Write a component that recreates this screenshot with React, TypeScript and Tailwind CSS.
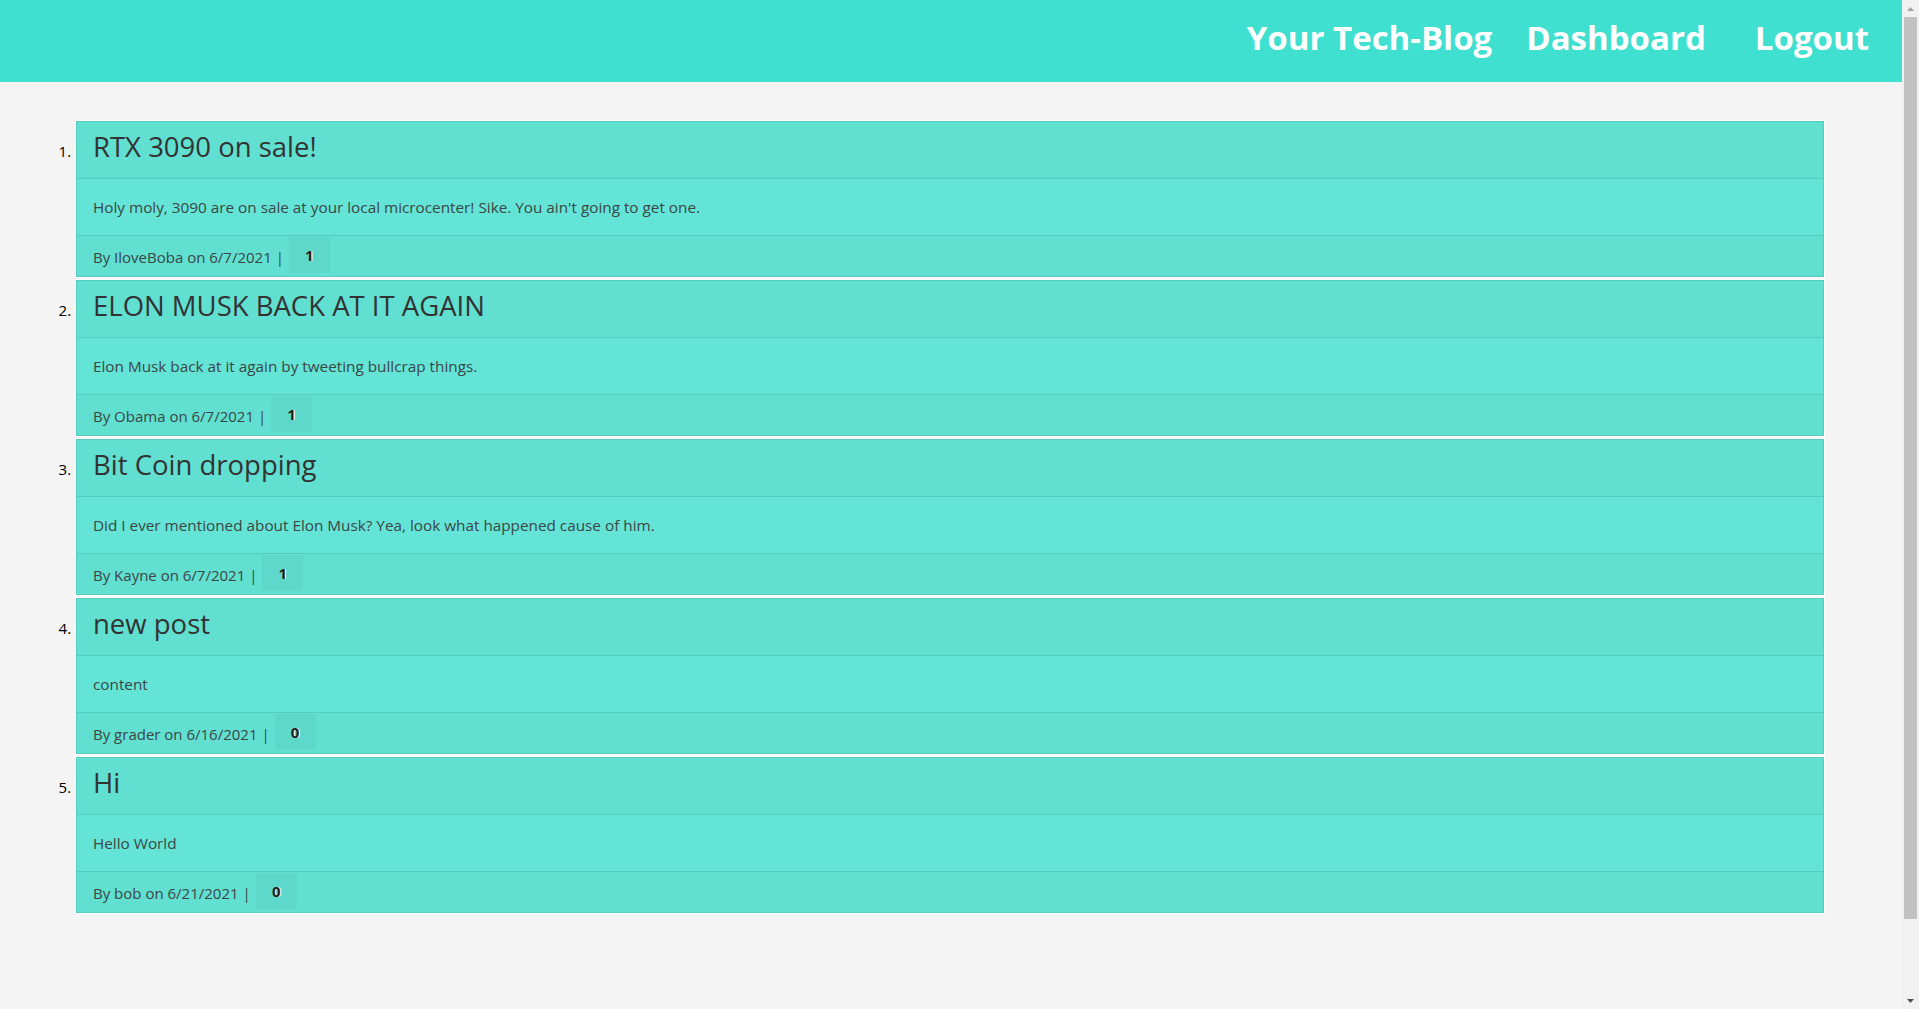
import React from 'react';

interface Post {
  title: string;
  content: string;
  author: string;
  date: string;
  comments: number;
}

const posts: Post[] = [
  {
    title: 'RTX 3090 on sale!',
    content: "Holy moly, 3090 are on sale at your local microcenter! Sike. You ain't going to get one.",
    author: 'IloveBoba',
    date: '6/7/2021',
    comments: 1,
  },
  {
    title: 'ELON MUSK BACK AT IT AGAIN',
    content: 'Elon Musk back at it again by tweeting bullcrap things.',
    author: 'Obama',
    date: '6/7/2021',
    comments: 1,
  },
  {
    title: 'Bit Coin dropping',
    content: 'Did I ever mentioned about Elon Musk? Yea, look what happened cause of him.',
    author: 'Kayne',
    date: '6/7/2021',
    comments: 1,
  },
  {
    title: 'new post',
    content: 'content',
    author: 'grader',
    date: '6/16/2021',
    comments: 0,
  },
  {
    title: 'Hi',
    content: 'Hello World',
    author: 'bob',
    date: '6/21/2021',
    comments: 0,
  },
];

function PostCard({ post }: { post: Post }) {
  return (
    <li className="bg-white p-px mb-px text-[15px] text-black">
      <div className="border border-[#58cbbf] bg-[#63e4d6]">
        <div className="bg-[#61dfd1] border-b border-[#58cbbf] px-4 pt-[8px] pb-[14px]">
          <h3 className="text-[27.5px] leading-[34px] text-[#333333]">{post.title}</h3>
        </div>
        <div className="px-4 py-4 border-b border-[#58cbbf]">
          <p className="text-[15.3px] leading-6 text-[#3b4745]">{post.content}</p>
        </div>
        <div className="bg-[#61dfd1] h-[40px] flex items-start pl-4 text-[15px] text-[#3b4745]">
          <span className="pt-[9px] leading-6">
            By {post.author} on {post.date} |
          </span>
          <span className="ml-[5px] mt-px h-[36px] w-[41px] flex items-center justify-center bg-[#5dd8cb] font-bold text-[15px] text-[#222] [text-shadow:1px_0_0_#ffffff]">
            {post.comments}
          </span>
        </div>
      </div>
    </li>
  );
}

// fake windows-style scrollbar, the page is a bit taller than the window
function Scrollbar() {
  return (
    <div className="w-[17px] h-full bg-[#f1f1f1] flex flex-col shrink-0">
      <div className="h-[17px] flex items-center justify-center">
        <svg width="7" height="4" viewBox="0 0 7 4">
          <path d="M3.5 0L7 4H0z" fill="#a3a3a3" />
        </svg>
      </div>
      <div className="h-[902px] mx-[2px] bg-[#c1c1c1]" />
      <div className="flex-1" />
      <div className="h-[17px] flex items-center justify-center">
        <svg width="7" height="4" viewBox="0 0 7 4">
          <path d="M0 0h7L3.5 4z" fill="#505050" />
        </svg>
      </div>
    </div>
  );
}

export default function App() {
  return (
    <div className="h-[1009px] flex overflow-hidden bg-[#f4f4f4] font-['Open_Sans','Noto_Sans',sans-serif]">
      <div className="flex-1 min-w-0">
        <header className="h-[82px] bg-[#40e0d0] flex items-center justify-end pr-[33px] pb-[7px] text-white font-bold text-[33px]">
          <a href="#" className="mr-[34px]">Your Tech-Blog</a>
          <a href="#" className="mr-[49px]">Dashboard</a>
          <a href="#">Logout</a>
        </header>
        <main className="pt-[38px]">
          <ol className="list-decimal pl-[75px] pr-[77px]">
            {posts.map((post) => (
              <PostCard key={post.title} post={post} />
            ))}
          </ol>
        </main>
      </div>
      <Scrollbar />
    </div>
  );
}
